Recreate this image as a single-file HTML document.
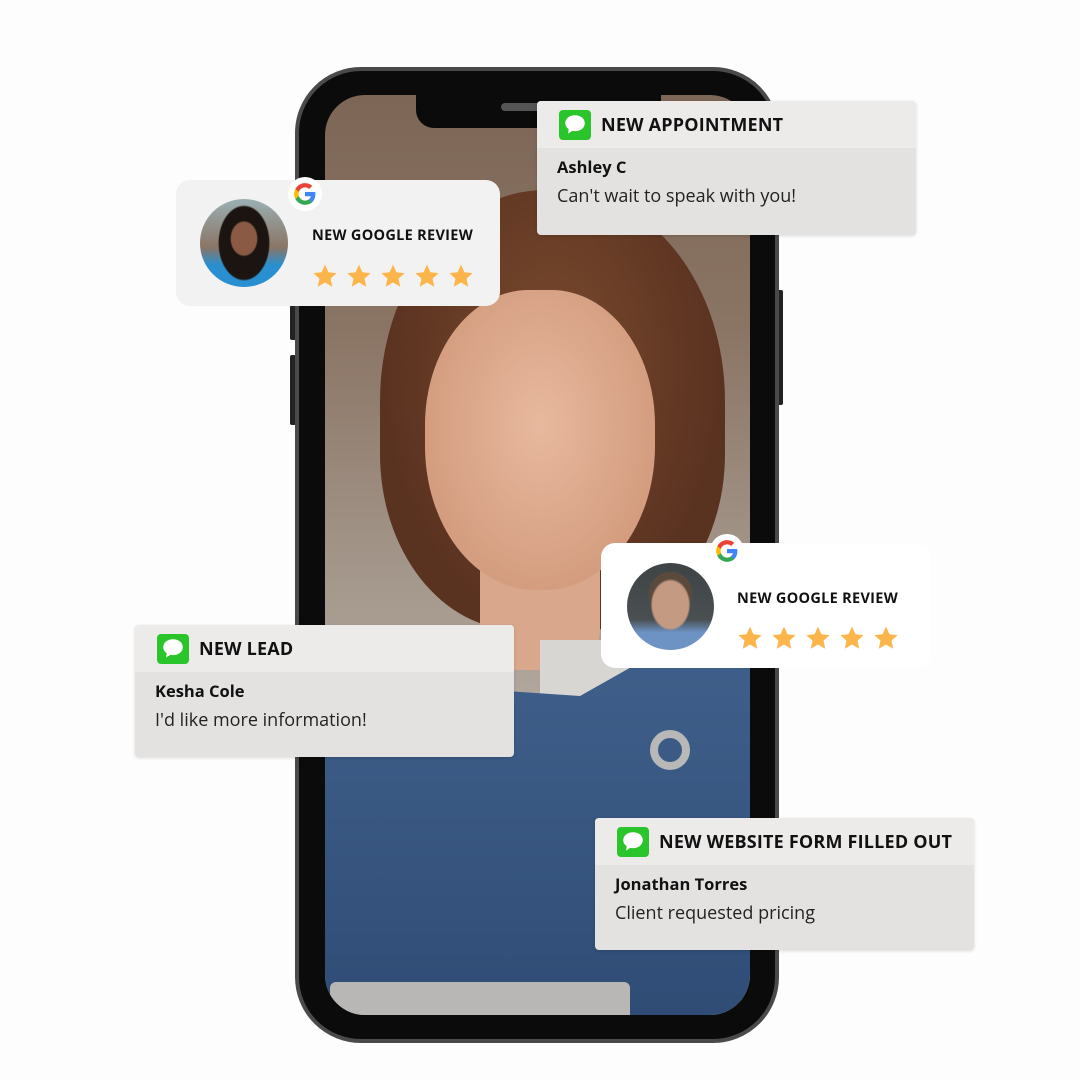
<!DOCTYPE html>
<html><head><meta charset="utf-8"><style>
*{margin:0;padding:0;box-sizing:border-box}
body{width:1080px;height:1080px;background:#fdfdfd;position:relative;overflow:hidden;font-family:"Open Sans","Liberation Sans",sans-serif}
.abs{position:absolute}
.phone{left:295px;top:67px;width:484px;height:976px;border-radius:66px;background:#0b0b0b;border:4px solid #4a4a4a}
.screen{left:325px;top:95px;width:425px;height:920px;border-radius:40px;overflow:hidden;
background:linear-gradient(180deg,#7d6656 0%,#8a7464 25%,#a29488 50%,#b9b2aa 75%,#c9c4bf 100%);}
.hair{left:380px;top:190px;width:345px;height:440px;border-radius:48% 48% 40% 40%;background:radial-gradient(ellipse at 50% 40%,#7a4a2e,#5a3220 70%)}
.face{left:425px;top:290px;width:230px;height:300px;border-radius:45% 45% 48% 48%;background:radial-gradient(ellipse at 50% 45%,#e8b99e,#d49d80 70%)}
.neck{left:480px;top:560px;width:120px;height:110px;background:#d9a78b;border-radius:0 0 40px 40px}
.apron{left:325px;top:660px;width:425px;height:360px;background:linear-gradient(180deg,#3f5f8a,#2f4c75);clip-path:polygon(0 15%,35% 8%,60% 10%,75% 0,100% 0,100% 100%,0 100%)}
.shirt{left:540px;top:640px;width:210px;height:80px;background:#d8d6d2}
.tablet{left:330px;top:982px;width:300px;height:40px;background:#b9b7b6;border-radius:6px}
.notch{left:416px;top:93px;width:245px;height:35px;background:#0b0b0b;border-radius:0 0 18px 18px}
.spk{left:501px;top:103px;width:70px;height:8px;background:#555;border-radius:4px}
.card{position:absolute;background:#e3e2e1;border-radius:4px;overflow:hidden;box-shadow:0 1px 3px rgba(0,0,0,.15)}
.card .hd{background:#ecebea;height:47px;display:flex;align-items:center;padding-left:22px;font-weight:bold;font-size:18px;color:#111;letter-spacing:.2px}
.ic{width:32px;height:30px;background:#2ac52a;border-radius:4px;margin-right:10px;display:flex;align-items:center;justify-content:center}
.card .nm{font-weight:bold;font-size:16.5px;color:#111;margin:7px 0 0 20px}
.card .tx{font-size:18px;color:#222;margin:6px 0 0 20px}
.rev{position:absolute;border-radius:14px}
.rev .t{position:absolute;font-weight:bold;font-size:14.5px;color:#111;letter-spacing:.3px}
.av{position:absolute;border-radius:50%;overflow:hidden}
.g{position:absolute;width:34px;height:34px;border-radius:50%;background:#fff;display:flex;align-items:center;justify-content:center}
.stars{position:absolute;display:flex;gap:8px}
</style></head><body>
<div class="abs" style="left:290px;top:305px;width:6px;height:35px;background:#222;border-radius:2px"></div>
<div class="abs" style="left:290px;top:355px;width:6px;height:70px;background:#222;border-radius:2px"></div>
<div class="abs" style="left:777px;top:290px;width:6px;height:115px;background:#222;border-radius:2px"></div>
<div class="abs phone"></div>
<div class="abs screen"></div>
<div class="abs" style="left:325px;top:95px;width:425px;height:920px;border-radius:40px;overflow:hidden">
<div class="abs hair" style="left:55px;top:95px"></div>
<div class="abs neck" style="left:155px;top:465px"></div>
<div class="abs face" style="left:100px;top:195px"></div>
<div class="abs shirt" style="left:215px;top:545px"></div>
<div class="abs apron" style="left:0;top:565px"></div>
<div class="abs" style="left:325px;top:635px;width:40px;height:40px;border-radius:50%;border:8px solid #b8b8b8"></div>
<div class="abs tablet" style="left:5px;top:887px"></div>
</div>
<div class="abs notch"></div>
<div class="abs spk"></div>

<svg width="0" height="0" style="position:absolute"><defs>
<symbol id="bub" viewBox="0 0 24 24"><path d="M12 3C6.5 3 3 6.3 3 10.3c0 2.3 1.2 4.2 3.2 5.5L5.5 20l4-2.6c.8.2 1.6.3 2.5.3 5.5 0 9-3.3 9-7.4S17.5 3 12 3z" fill="#fff"/></symbol>
<symbol id="star" viewBox="0 0 24 24"><path d="M12 1.5l3.2 7 7.5.8-5.6 5.1 1.6 7.5L12 18l-6.7 3.9 1.6-7.5L1.3 9.3l7.5-.8z" fill="#fcb54a"/></symbol>
<symbol id="gg" viewBox="0 0 24 24"><path d="M21.6 12.2c0-.7-.1-1.4-.2-2H12v3.9h5.4a4.6 4.6 0 0 1-2 3v2.5h3.2c1.9-1.7 3-4.3 3-7.4z" fill="#4285f4"/><path d="M12 22c2.7 0 5-.9 6.6-2.4l-3.2-2.5c-.9.6-2 1-3.4 1-2.6 0-4.8-1.8-5.6-4.1H3.1v2.6A10 10 0 0 0 12 22z" fill="#34a853"/><path d="M6.4 14a6 6 0 0 1 0-4V7.4H3.1a10 10 0 0 0 0 9.2z" fill="#fbbc05"/><path d="M12 5.9c1.5 0 2.8.5 3.8 1.5l2.9-2.9A10 10 0 0 0 3.1 7.4L6.4 10C7.2 7.7 9.4 5.9 12 5.9z" fill="#ea4335"/></symbol>
</defs></svg>

<div class="card" style="left:537px;top:101px;width:379px;height:134px">
<div class="hd"><div class="ic"><svg width="26" height="26"><use href="#bub"/></svg></div>NEW APPOINTMENT</div>
<div class="nm">Ashley C</div><div class="tx">Can't wait to speak with you!</div></div>

<div class="rev" style="left:176px;top:180px;width:324px;height:126px;background:#f2f2f2">
<div class="av" style="left:24px;top:19px;width:88px;height:88px;background:radial-gradient(ellipse 14px 18px at 50% 45%,#8a5a44 0 90%,transparent 100%),radial-gradient(ellipse 26px 38px at 50% 50%,#1c1410 0 95%,transparent 100%),linear-gradient(180deg,#9bb0b4 0%,#8a7565 55%,#2a8fd0 75%,#2a8fd0 100%)"></div>
<div class="t" style="left:136px;top:46px">NEW GOOGLE REVIEW</div>
<div class="stars" style="left:136px;top:83px"><svg width="26" height="26"><use href="#star"/></svg><svg width="26" height="26"><use href="#star"/></svg><svg width="26" height="26"><use href="#star"/></svg><svg width="26" height="26"><use href="#star"/></svg><svg width="26" height="26"><use href="#star"/></svg></div>
</div>
<div class="g" style="left:288px;top:177px"><svg width="26" height="26"><use href="#gg"/></svg></div>

<div class="rev" style="left:601px;top:543px;width:330px;height:125px;background:#fff">
<div class="av" style="left:26px;top:20px;width:87px;height:87px;background:radial-gradient(ellipse 20px 26px at 50% 48%,#c59a82 0 90%,transparent 100%),radial-gradient(circle at 50% 35%,#5a4a3e 0 30%,transparent 31%),linear-gradient(180deg,#3e4446 0%,#4a4f52 65%,#6c93c4 80%,#6c93c4 100%)"></div>
<div class="t" style="left:136px;top:46px">NEW GOOGLE REVIEW</div>
<div class="stars" style="left:136px;top:82px"><svg width="26" height="26"><use href="#star"/></svg><svg width="26" height="26"><use href="#star"/></svg><svg width="26" height="26"><use href="#star"/></svg><svg width="26" height="26"><use href="#star"/></svg><svg width="26" height="26"><use href="#star"/></svg></div>
</div>
<div class="g" style="left:710px;top:534px"><svg width="26" height="26"><use href="#gg"/></svg></div>

<div class="card" style="left:135px;top:625px;width:379px;height:132px">
<div class="hd"><div class="ic"><svg width="26" height="26"><use href="#bub"/></svg></div>NEW LEAD</div>
<div class="nm">Kesha Cole</div><div class="tx">I'd like more information!</div></div>

<div class="card" style="left:595px;top:818px;width:379px;height:132px">
<div class="hd"><div class="ic"><svg width="26" height="26"><use href="#bub"/></svg></div>NEW WEBSITE FORM FILLED OUT</div>
<div class="nm">Jonathan Torres</div><div class="tx">Client requested pricing</div></div>
</body></html>
